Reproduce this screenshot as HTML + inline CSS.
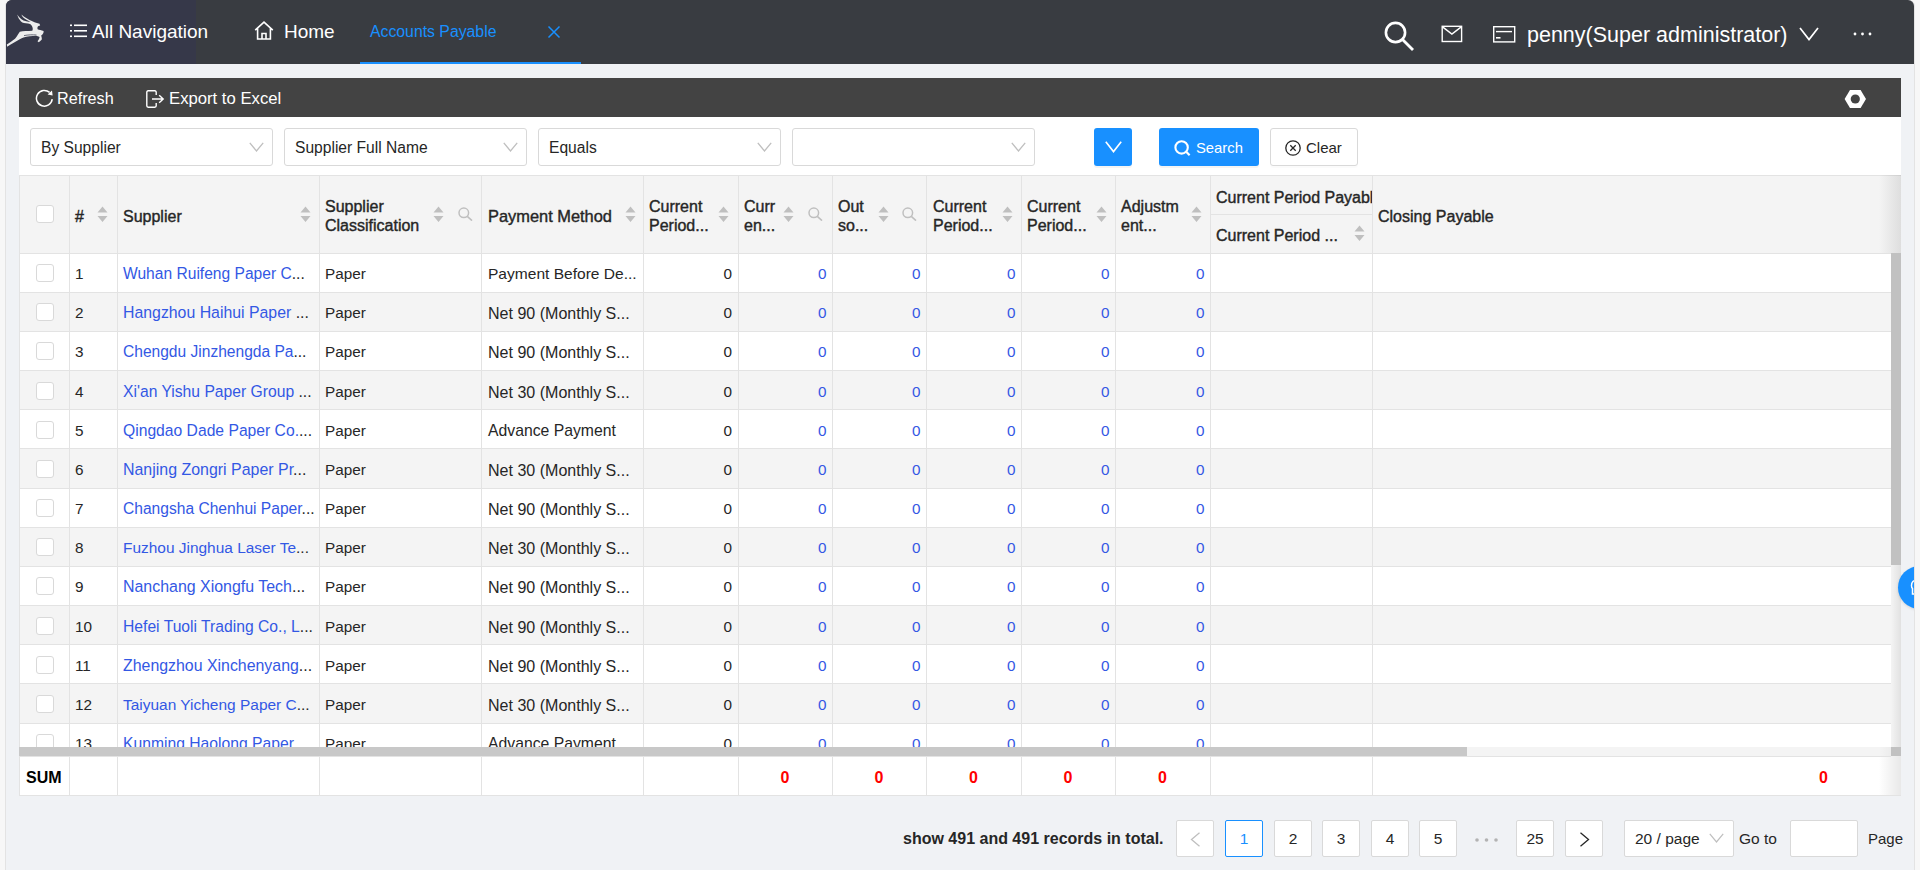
<!DOCTYPE html>
<html><head><meta charset="utf-8">
<style>
*{box-sizing:border-box;margin:0;padding:0}
html,body{width:1920px;height:870px;overflow:hidden;background:#f7f7f7;font-family:"Liberation Sans",sans-serif;color:#262626}
.abs{position:absolute}
#page{position:absolute;left:5px;top:0;width:1910px;height:870px;background:#f0f2f5;border-left:1px solid #e3e3e3;border-right:1px solid #e3e3e3;border-radius:6px 6px 0 0;overflow:hidden}
#hdr{position:absolute;left:6px;top:0;width:1908px;height:64px;background:#393c41;border-radius:6px 6px 0 0;overflow:hidden}
#logo{position:absolute;left:0;top:0;width:190px;height:64px;background:#363849}
.wt{color:#fff;white-space:nowrap}
#toolbar{position:absolute;left:19px;top:78px;width:1882px;height:39px;background:#434343}
#filter{position:absolute;left:19px;top:117px;width:1882px;height:58px;background:#fff}
.sel{position:absolute;top:11px;height:38px;width:243px;border:1px solid #d9d9d9;border-radius:3px;background:#fff;font-size:15.6px;color:#262626}
.sel span{position:absolute;left:10px;top:10px;white-space:nowrap}
.sel svg{position:absolute;right:8px;top:13px}
#tbl{position:absolute;left:19px;top:175px;width:1882px;height:621px}
.td{font-size:15.3px;color:#262626;white-space:nowrap;line-height:18px}
.lk{color:#3358e4}
.num{text-align:right}
.th{font-size:16px;font-weight:normal;-webkit-text-stroke:0.4px #262626;color:#262626;white-space:nowrap;line-height:19px;margin-top:1px}
.sum{font-size:16px;font-weight:bold;color:#000;line-height:18px}
.sumv{font-size:16px;font-weight:bold;color:#f00;line-height:18px}
.pbtn{position:absolute;top:820px;width:38px;height:37px;background:#fff;border:1px solid #d9d9d9;border-radius:2px;text-align:center;font-size:15.5px;line-height:35px;color:#262626}
</style></head>
<body>
<div id="page"></div>
<div id="hdr">
  <div id="logo">
    <svg class="abs" style="left:-6px;top:0" width="50" height="50" viewBox="0 0 50 50"><path d="M6.8 44.6 C10 42.5 13 40.5 15 38.8 C17 36.5 18.5 33.5 19.8 31.8 C23 31.2 28 31 32.3 30.8 C33 29.5 33 27.5 31.6 25.4 C30.5 24 29.5 23.5 28 23.4 C25 23.4 22.5 23 21 21.5 C19.2 19.6 17.8 17 17.2 14.6 C18.8 16.8 20.5 19.2 23.5 20.6 C26 21.5 28.5 21.8 30.5 22 C27.5 20.5 25 19 23.5 17.8 C22.5 17 21.8 15.8 21.5 14.6 C23.5 16.5 26 18.3 29.5 20 C32 21.2 34 22.2 36 22.8 L39.5 23.8 L40.2 25.4 L38.5 26 C37.5 26.5 37.2 27.5 37.6 29.2 C39 29.8 41.5 30.2 43.6 31 C43.8 32.5 43.2 34 41.2 35.6 C41.5 37 42 38.5 41.8 39.6 C40.8 40.8 39.8 41.8 38.8 42.3 L37.5 41.2 C38.5 40 39.5 38.5 39.6 37 C38.5 36.3 37.2 36 36 35.8 C32 36.2 27 36.5 23.5 37.4 C19 39.2 12 43.5 7.2 46.8 Z" fill="#ececec"/><path d="M24 35.6 C28 34.8 32.5 34.6 36.5 35" fill="none" stroke="#5a5c6c" stroke-width="0.9"/></svg>
  </div>
  <svg class="abs" style="left:64px;top:24px" width="17" height="14" viewBox="0 0 17 14"><g fill="#fff"><rect x="0" y="0.5" width="2" height="1.6"/><rect x="4" y="0.5" width="13" height="1.6"/><rect x="0" y="6" width="2" height="1.6"/><rect x="4" y="6" width="13" height="1.6"/><rect x="0" y="11.5" width="2" height="1.6"/><rect x="4" y="11.5" width="13" height="1.6"/></g></svg>
  <div class="abs wt" style="left:86px;top:21px;font-size:19px">All Navigation</div>
  <svg class="abs" style="left:248px;top:21px" width="20" height="19" viewBox="0 0 20 19"><path d="M1.2 9.2 L10 1.2 L18.8 9.2 M3.6 7.4 V18 H16.4 V7.4 M8 18 V12.5 H12 V18" fill="none" stroke="#fff" stroke-width="1.6" stroke-linejoin="miter"/></svg>
  <div class="abs wt" style="left:278px;top:21px;font-size:19px">Home</div>
  <div class="abs" style="left:364px;top:23px;font-size:15.8px;color:#1890ff;white-space:nowrap">Accounts Payable</div>
  <svg class="abs" style="left:541px;top:25px" width="14" height="14" viewBox="0 0 14 14"><path d="M1.5 1.5 L12.5 12.5 M12.5 1.5 L1.5 12.5" stroke="#1890ff" stroke-width="1.5"/></svg>
  <div class="abs" style="left:354px;top:62px;width:221px;height:2px;background:#1890ff"></div>
  <svg class="abs" style="left:1378px;top:21px" width="31" height="31" viewBox="0 0 31 31"><circle cx="11.5" cy="11.5" r="9.6" fill="none" stroke="#fff" stroke-width="2.6"/><path d="M18.5 18.5 L29 29" stroke="#fff" stroke-width="2.8"/></svg>
  <svg class="abs" style="left:1435px;top:25px" width="22" height="18" viewBox="0 0 22 18"><rect x="1.2" y="1.3" width="19.4" height="15.2" fill="none" stroke="#fff" stroke-width="1.4"/><path d="M1.2 1.6 L10.9 9 L20.6 1.6" fill="none" stroke="#fff" stroke-width="1.4"/></svg>
  <svg class="abs" style="left:1487px;top:26px" width="23" height="18" viewBox="0 0 23 18"><rect x="0.7" y="0.7" width="21" height="15.2" fill="none" stroke="#fff" stroke-width="1.4"/><path d="M3 5.6 H19" stroke="#fff" stroke-width="1.4"/><path d="M3 11.8 H7.5" stroke="#fff" stroke-width="1.6"/></svg>
  <div class="abs wt" style="left:1521px;top:23px;font-size:21.5px">penny(Super administrator)</div>
  <svg class="abs" style="left:1793px;top:27px" width="20" height="14" viewBox="0 0 20 14"><path d="M1 1 L10 12.5 L19 1" fill="none" stroke="#fff" stroke-width="1.7"/></svg>
  <svg class="abs" style="left:1847px;top:32px" width="20" height="4" viewBox="0 0 20 4"><circle cx="2" cy="2" r="1.4" fill="#fff"/><circle cx="9.5" cy="2" r="1.4" fill="#fff"/><circle cx="17" cy="2" r="1.4" fill="#fff"/></svg>
</div>
<div id="toolbar">
  <svg class="abs" style="left:16px;top:11px" width="19" height="19" viewBox="0 0 19 19"><path d="M17.2 10.2 A7.9 7.9 0 1 1 14.6 3.4" fill="none" stroke="#fff" stroke-width="1.5"/><path d="M12.6 5.6 L17.6 6.6 L17.0 1.4 Z" fill="#fff"/></svg>
  <div class="abs wt" style="left:38px;top:11px;font-size:16.2px">Refresh</div>
  <svg class="abs" style="left:127px;top:12px" width="19" height="18" viewBox="0 0 19 18"><path d="M10.2 5 V2.2 Q10.2 0.8 8.8 0.8 H2.2 Q0.8 0.8 0.8 2.2 V15.8 Q0.8 17.2 2.2 17.2 H8.8 Q10.2 17.2 10.2 15.8 V13" fill="none" stroke="#fff" stroke-width="1.4"/><path d="M6 9 H17 M13.2 5.2 L17.2 9 L13.2 12.8" fill="none" stroke="#fff" stroke-width="1.4"/></svg>
  <div class="abs wt" style="left:150px;top:11px;font-size:16.7px">Export to Excel</div>
  <svg class="abs" style="left:1825px;top:11px" width="23" height="20" viewBox="0 0 23 20"><path d="M6 1 H16.6 L22 10 L16.6 19 H6 L0.6 10 Z" fill="#fff"/><circle cx="11.3" cy="10" r="4.6" fill="#434343"/></svg>
</div>
<div id="filter">
  <div class="sel" style="left:11px"><span>By Supplier</span><svg width="15" height="10" viewBox="0 0 15 10"><path d="M0.8 0.8 L7.5 9 L14.2 0.8" fill="none" stroke="#bfbfbf" stroke-width="1.3"/></svg></div>
  <div class="sel" style="left:265px"><span>Supplier Full Name</span><svg width="15" height="10" viewBox="0 0 15 10"><path d="M0.8 0.8 L7.5 9 L14.2 0.8" fill="none" stroke="#bfbfbf" stroke-width="1.3"/></svg></div>
  <div class="sel" style="left:519px"><span>Equals</span><svg width="15" height="10" viewBox="0 0 15 10"><path d="M0.8 0.8 L7.5 9 L14.2 0.8" fill="none" stroke="#bfbfbf" stroke-width="1.3"/></svg></div>
  <div class="sel" style="left:773px"><svg width="15" height="10" viewBox="0 0 15 10"><path d="M0.8 0.8 L7.5 9 L14.2 0.8" fill="none" stroke="#bfbfbf" stroke-width="1.3"/></svg></div>
  <div class="abs" style="left:1075px;top:11px;width:38px;height:38px;background:#1890ff;border-radius:3px;box-shadow:0 2px 0 rgba(0,0,0,0.045)"><svg class="abs" style="left:11px;top:13px" width="17" height="12" viewBox="0 0 17 12"><path d="M0.8 0.8 L8.5 10.6 L16.2 0.8" fill="none" stroke="#fff" stroke-width="1.6"/></svg></div>
  <div class="abs" style="left:1140px;top:11px;width:100px;height:38px;background:#1890ff;border-radius:3px;box-shadow:0 2px 0 rgba(0,0,0,0.045)">
    <svg class="abs" style="left:15px;top:12px" width="18" height="17" viewBox="0 0 18 17"><circle cx="7.6" cy="7.4" r="6.2" fill="none" stroke="#fff" stroke-width="2.1"/><path d="M12.2 11.8 L15.6 15.2" stroke="#fff" stroke-width="2.2"/></svg>
    <div class="abs wt" style="left:37px;top:12px;font-size:14.8px">Search</div>
  </div>
  <div class="abs" style="left:1251px;top:11px;width:88px;height:38px;background:#fff;border:1px solid #d9d9d9;border-radius:3px;box-shadow:0 2px 0 rgba(0,0,0,0.015)">
    <svg class="abs" style="left:14px;top:11px" width="17" height="17" viewBox="0 0 17 17"><circle cx="8" cy="8" r="7.2" fill="none" stroke="#262626" stroke-width="1.3"/><path d="M5.3 5.3 L10.7 10.7 M10.7 5.3 L5.3 10.7" stroke="#262626" stroke-width="1.3"/></svg>
    <div class="abs" style="left:35px;top:10px;font-size:15px;color:#262626;white-space:nowrap">Clear</div>
  </div>
</div>
<div id="tbl">
<div class="abs" style="left:0px;top:0px;width:1882px;height:78px;background:#f4f4f4"></div>
<div class="abs" style="left:0;top:78px;width:1872px;height:494px;overflow:hidden">
<div class="abs" style="left:0px;top:0px;width:1872px;height:39.1667px;background:#fff"></div>
<div class="abs" style="left:0px;top:39.167px;width:1872px;height:39.1667px;background:#f4f4f4"></div>
<div class="abs" style="left:0px;top:78.333px;width:1872px;height:39.1667px;background:#fff"></div>
<div class="abs" style="left:0px;top:117.5px;width:1872px;height:39.1667px;background:#f4f4f4"></div>
<div class="abs" style="left:0px;top:156.667px;width:1872px;height:39.1667px;background:#fff"></div>
<div class="abs" style="left:0px;top:195.833px;width:1872px;height:39.1667px;background:#f4f4f4"></div>
<div class="abs" style="left:0px;top:235px;width:1872px;height:39.1667px;background:#fff"></div>
<div class="abs" style="left:0px;top:274.167px;width:1872px;height:39.1667px;background:#f4f4f4"></div>
<div class="abs" style="left:0px;top:313.334px;width:1872px;height:39.1667px;background:#fff"></div>
<div class="abs" style="left:0px;top:352.5px;width:1872px;height:39.1667px;background:#f4f4f4"></div>
<div class="abs" style="left:0px;top:391.667px;width:1872px;height:39.1667px;background:#fff"></div>
<div class="abs" style="left:0px;top:430.834px;width:1872px;height:39.1667px;background:#f4f4f4"></div>
<div class="abs" style="left:0px;top:470px;width:1872px;height:39.1667px;background:#fff"></div>
<div class="abs" style="left:0px;top:38.667px;width:1872px;height:1px;background:#e3e3e3"></div>
<div class="abs" style="left:0px;top:77.833px;width:1872px;height:1px;background:#e3e3e3"></div>
<div class="abs" style="left:0px;top:117px;width:1872px;height:1px;background:#e3e3e3"></div>
<div class="abs" style="left:0px;top:156.167px;width:1872px;height:1px;background:#e3e3e3"></div>
<div class="abs" style="left:0px;top:195.333px;width:1872px;height:1px;background:#e3e3e3"></div>
<div class="abs" style="left:0px;top:234.5px;width:1872px;height:1px;background:#e3e3e3"></div>
<div class="abs" style="left:0px;top:273.667px;width:1872px;height:1px;background:#e3e3e3"></div>
<div class="abs" style="left:0px;top:312.834px;width:1872px;height:1px;background:#e3e3e3"></div>
<div class="abs" style="left:0px;top:352px;width:1872px;height:1px;background:#e3e3e3"></div>
<div class="abs" style="left:0px;top:391.167px;width:1872px;height:1px;background:#e3e3e3"></div>
<div class="abs" style="left:0px;top:430.334px;width:1872px;height:1px;background:#e3e3e3"></div>
<div class="abs" style="left:0px;top:469.5px;width:1872px;height:1px;background:#e3e3e3"></div>
<div class="abs" style="left:0px;top:508.667px;width:1872px;height:1px;background:#e3e3e3"></div>
<div class="abs" style="left:0px;top:0px;width:1px;height:494px;background:#e3e3e3"></div>
<div class="abs" style="left:50px;top:0px;width:1px;height:494px;background:#e3e3e3"></div>
<div class="abs" style="left:98px;top:0px;width:1px;height:494px;background:#e3e3e3"></div>
<div class="abs" style="left:300px;top:0px;width:1px;height:494px;background:#e3e3e3"></div>
<div class="abs" style="left:462px;top:0px;width:1px;height:494px;background:#e3e3e3"></div>
<div class="abs" style="left:624px;top:0px;width:1px;height:494px;background:#e3e3e3"></div>
<div class="abs" style="left:719px;top:0px;width:1px;height:494px;background:#e3e3e3"></div>
<div class="abs" style="left:813px;top:0px;width:1px;height:494px;background:#e3e3e3"></div>
<div class="abs" style="left:907px;top:0px;width:1px;height:494px;background:#e3e3e3"></div>
<div class="abs" style="left:1002px;top:0px;width:1px;height:494px;background:#e3e3e3"></div>
<div class="abs" style="left:1096px;top:0px;width:1px;height:494px;background:#e3e3e3"></div>
<div class="abs" style="left:1191px;top:0px;width:1px;height:494px;background:#e3e3e3"></div>
<div class="abs" style="left:1353px;top:0px;width:1px;height:494px;background:#e3e3e3"></div>
<div class="abs" style="left:17px;top:11px;width:18px;height:18px;background:#fff;border:1px solid #d9d9d9;border-radius:3px"></div>
<div class="abs td" style="left:56px;top:12px;">1</div>
<div class="abs td lk" style="left:104px;top:12px;font-size:15.6px">Wuhan Ruifeng Paper C<span style="color:#262626">...</span></div>
<div class="abs td" style="left:306px;top:12px;">Paper</div>
<div class="abs td" style="left:469px;top:12px;font-size:15.55px">Payment Before De...</div>
<div class="abs td num" style="left:624px;top:12px;width:89px">0</div>
<div class="abs td num lk" style="left:719px;top:12px;width:88.5px">0</div>
<div class="abs td num lk" style="left:813px;top:12px;width:88.5px">0</div>
<div class="abs td num lk" style="left:907px;top:12px;width:89.5px">0</div>
<div class="abs td num lk" style="left:1002px;top:12px;width:88.5px">0</div>
<div class="abs td num lk" style="left:1096px;top:12px;width:89.5px">0</div>
<div class="abs" style="left:17px;top:50.167px;width:18px;height:18px;background:#fff;border:1px solid #d9d9d9;border-radius:3px"></div>
<div class="abs td" style="left:56px;top:51.167px;">2</div>
<div class="abs td lk" style="left:104px;top:51.167px;font-size:15.85px">Hangzhou Haihui Paper <span style="color:#262626">...</span></div>
<div class="abs td" style="left:306px;top:51.167px;">Paper</div>
<div class="abs td" style="left:469px;top:51.167px;font-size:16.05px">Net 90 (Monthly S...</div>
<div class="abs td num" style="left:624px;top:51.167px;width:89px">0</div>
<div class="abs td num lk" style="left:719px;top:51.167px;width:88.5px">0</div>
<div class="abs td num lk" style="left:813px;top:51.167px;width:88.5px">0</div>
<div class="abs td num lk" style="left:907px;top:51.167px;width:89.5px">0</div>
<div class="abs td num lk" style="left:1002px;top:51.167px;width:88.5px">0</div>
<div class="abs td num lk" style="left:1096px;top:51.167px;width:89.5px">0</div>
<div class="abs" style="left:17px;top:89.333px;width:18px;height:18px;background:#fff;border:1px solid #d9d9d9;border-radius:3px"></div>
<div class="abs td" style="left:56px;top:90.333px;">3</div>
<div class="abs td lk" style="left:104px;top:90.333px;font-size:15.57px">Chengdu Jinzhengda Pa<span style="color:#262626">...</span></div>
<div class="abs td" style="left:306px;top:90.333px;">Paper</div>
<div class="abs td" style="left:469px;top:90.333px;font-size:16.05px">Net 90 (Monthly S...</div>
<div class="abs td num" style="left:624px;top:90.333px;width:89px">0</div>
<div class="abs td num lk" style="left:719px;top:90.333px;width:88.5px">0</div>
<div class="abs td num lk" style="left:813px;top:90.333px;width:88.5px">0</div>
<div class="abs td num lk" style="left:907px;top:90.333px;width:89.5px">0</div>
<div class="abs td num lk" style="left:1002px;top:90.333px;width:88.5px">0</div>
<div class="abs td num lk" style="left:1096px;top:90.333px;width:89.5px">0</div>
<div class="abs" style="left:17px;top:128.5px;width:18px;height:18px;background:#fff;border:1px solid #d9d9d9;border-radius:3px"></div>
<div class="abs td" style="left:56px;top:129.5px;">4</div>
<div class="abs td lk" style="left:104px;top:129.5px;font-size:15.68px">Xi'an Yishu Paper Group <span style="color:#262626">...</span></div>
<div class="abs td" style="left:306px;top:129.5px;">Paper</div>
<div class="abs td" style="left:469px;top:129.5px;font-size:16.05px">Net 30 (Monthly S...</div>
<div class="abs td num" style="left:624px;top:129.5px;width:89px">0</div>
<div class="abs td num lk" style="left:719px;top:129.5px;width:88.5px">0</div>
<div class="abs td num lk" style="left:813px;top:129.5px;width:88.5px">0</div>
<div class="abs td num lk" style="left:907px;top:129.5px;width:89.5px">0</div>
<div class="abs td num lk" style="left:1002px;top:129.5px;width:88.5px">0</div>
<div class="abs td num lk" style="left:1096px;top:129.5px;width:89.5px">0</div>
<div class="abs" style="left:17px;top:167.667px;width:18px;height:18px;background:#fff;border:1px solid #d9d9d9;border-radius:3px"></div>
<div class="abs td" style="left:56px;top:168.667px;">5</div>
<div class="abs td lk" style="left:104px;top:168.667px;font-size:15.68px">Qingdao Dade Paper Co.<span style="color:#262626">...</span></div>
<div class="abs td" style="left:306px;top:168.667px;">Paper</div>
<div class="abs td" style="left:469px;top:168.667px;font-size:15.75px">Advance Payment</div>
<div class="abs td num" style="left:624px;top:168.667px;width:89px">0</div>
<div class="abs td num lk" style="left:719px;top:168.667px;width:88.5px">0</div>
<div class="abs td num lk" style="left:813px;top:168.667px;width:88.5px">0</div>
<div class="abs td num lk" style="left:907px;top:168.667px;width:89.5px">0</div>
<div class="abs td num lk" style="left:1002px;top:168.667px;width:88.5px">0</div>
<div class="abs td num lk" style="left:1096px;top:168.667px;width:89.5px">0</div>
<div class="abs" style="left:17px;top:206.833px;width:18px;height:18px;background:#fff;border:1px solid #d9d9d9;border-radius:3px"></div>
<div class="abs td" style="left:56px;top:207.833px;">6</div>
<div class="abs td lk" style="left:104px;top:207.833px;font-size:15.95px">Nanjing Zongri Paper Pr<span style="color:#262626">...</span></div>
<div class="abs td" style="left:306px;top:207.833px;">Paper</div>
<div class="abs td" style="left:469px;top:207.833px;font-size:16.05px">Net 30 (Monthly S...</div>
<div class="abs td num" style="left:624px;top:207.833px;width:89px">0</div>
<div class="abs td num lk" style="left:719px;top:207.833px;width:88.5px">0</div>
<div class="abs td num lk" style="left:813px;top:207.833px;width:88.5px">0</div>
<div class="abs td num lk" style="left:907px;top:207.833px;width:89.5px">0</div>
<div class="abs td num lk" style="left:1002px;top:207.833px;width:88.5px">0</div>
<div class="abs td num lk" style="left:1096px;top:207.833px;width:89.5px">0</div>
<div class="abs" style="left:17px;top:246px;width:18px;height:18px;background:#fff;border:1px solid #d9d9d9;border-radius:3px"></div>
<div class="abs td" style="left:56px;top:247px;">7</div>
<div class="abs td lk" style="left:104px;top:247px;font-size:15.6px">Changsha Chenhui Paper<span style="color:#262626">...</span></div>
<div class="abs td" style="left:306px;top:247px;">Paper</div>
<div class="abs td" style="left:469px;top:247px;font-size:16.05px">Net 90 (Monthly S...</div>
<div class="abs td num" style="left:624px;top:247px;width:89px">0</div>
<div class="abs td num lk" style="left:719px;top:247px;width:88.5px">0</div>
<div class="abs td num lk" style="left:813px;top:247px;width:88.5px">0</div>
<div class="abs td num lk" style="left:907px;top:247px;width:89.5px">0</div>
<div class="abs td num lk" style="left:1002px;top:247px;width:88.5px">0</div>
<div class="abs td num lk" style="left:1096px;top:247px;width:89.5px">0</div>
<div class="abs" style="left:17px;top:285.167px;width:18px;height:18px;background:#fff;border:1px solid #d9d9d9;border-radius:3px"></div>
<div class="abs td" style="left:56px;top:286.167px;">8</div>
<div class="abs td lk" style="left:104px;top:286.167px;font-size:15.45px">Fuzhou Jinghua Laser Te<span style="color:#262626">...</span></div>
<div class="abs td" style="left:306px;top:286.167px;">Paper</div>
<div class="abs td" style="left:469px;top:286.167px;font-size:16.05px">Net 30 (Monthly S...</div>
<div class="abs td num" style="left:624px;top:286.167px;width:89px">0</div>
<div class="abs td num lk" style="left:719px;top:286.167px;width:88.5px">0</div>
<div class="abs td num lk" style="left:813px;top:286.167px;width:88.5px">0</div>
<div class="abs td num lk" style="left:907px;top:286.167px;width:89.5px">0</div>
<div class="abs td num lk" style="left:1002px;top:286.167px;width:88.5px">0</div>
<div class="abs td num lk" style="left:1096px;top:286.167px;width:89.5px">0</div>
<div class="abs" style="left:17px;top:324.334px;width:18px;height:18px;background:#fff;border:1px solid #d9d9d9;border-radius:3px"></div>
<div class="abs td" style="left:56px;top:325.334px;">9</div>
<div class="abs td lk" style="left:104px;top:325.334px;font-size:15.95px">Nanchang Xiongfu Tech<span style="color:#262626">...</span></div>
<div class="abs td" style="left:306px;top:325.334px;">Paper</div>
<div class="abs td" style="left:469px;top:325.334px;font-size:16.05px">Net 90 (Monthly S...</div>
<div class="abs td num" style="left:624px;top:325.334px;width:89px">0</div>
<div class="abs td num lk" style="left:719px;top:325.334px;width:88.5px">0</div>
<div class="abs td num lk" style="left:813px;top:325.334px;width:88.5px">0</div>
<div class="abs td num lk" style="left:907px;top:325.334px;width:89.5px">0</div>
<div class="abs td num lk" style="left:1002px;top:325.334px;width:88.5px">0</div>
<div class="abs td num lk" style="left:1096px;top:325.334px;width:89.5px">0</div>
<div class="abs" style="left:17px;top:363.5px;width:18px;height:18px;background:#fff;border:1px solid #d9d9d9;border-radius:3px"></div>
<div class="abs td" style="left:56px;top:364.5px;">10</div>
<div class="abs td lk" style="left:104px;top:364.5px;font-size:15.68px">Hefei Tuoli Trading Co., L<span style="color:#262626">...</span></div>
<div class="abs td" style="left:306px;top:364.5px;">Paper</div>
<div class="abs td" style="left:469px;top:364.5px;font-size:16.05px">Net 90 (Monthly S...</div>
<div class="abs td num" style="left:624px;top:364.5px;width:89px">0</div>
<div class="abs td num lk" style="left:719px;top:364.5px;width:88.5px">0</div>
<div class="abs td num lk" style="left:813px;top:364.5px;width:88.5px">0</div>
<div class="abs td num lk" style="left:907px;top:364.5px;width:89.5px">0</div>
<div class="abs td num lk" style="left:1002px;top:364.5px;width:88.5px">0</div>
<div class="abs td num lk" style="left:1096px;top:364.5px;width:89.5px">0</div>
<div class="abs" style="left:17px;top:402.667px;width:18px;height:18px;background:#fff;border:1px solid #d9d9d9;border-radius:3px"></div>
<div class="abs td" style="left:56px;top:403.667px;">11</div>
<div class="abs td lk" style="left:104px;top:403.667px;font-size:15.9px">Zhengzhou Xinchenyang<span style="color:#262626">...</span></div>
<div class="abs td" style="left:306px;top:403.667px;">Paper</div>
<div class="abs td" style="left:469px;top:403.667px;font-size:16.05px">Net 90 (Monthly S...</div>
<div class="abs td num" style="left:624px;top:403.667px;width:89px">0</div>
<div class="abs td num lk" style="left:719px;top:403.667px;width:88.5px">0</div>
<div class="abs td num lk" style="left:813px;top:403.667px;width:88.5px">0</div>
<div class="abs td num lk" style="left:907px;top:403.667px;width:89.5px">0</div>
<div class="abs td num lk" style="left:1002px;top:403.667px;width:88.5px">0</div>
<div class="abs td num lk" style="left:1096px;top:403.667px;width:89.5px">0</div>
<div class="abs" style="left:17px;top:441.834px;width:18px;height:18px;background:#fff;border:1px solid #d9d9d9;border-radius:3px"></div>
<div class="abs td" style="left:56px;top:442.834px;">12</div>
<div class="abs td lk" style="left:104px;top:442.834px;font-size:15.47px">Taiyuan Yicheng Paper C<span style="color:#262626">...</span></div>
<div class="abs td" style="left:306px;top:442.834px;">Paper</div>
<div class="abs td" style="left:469px;top:442.834px;font-size:16.05px">Net 30 (Monthly S...</div>
<div class="abs td num" style="left:624px;top:442.834px;width:89px">0</div>
<div class="abs td num lk" style="left:719px;top:442.834px;width:88.5px">0</div>
<div class="abs td num lk" style="left:813px;top:442.834px;width:88.5px">0</div>
<div class="abs td num lk" style="left:907px;top:442.834px;width:89.5px">0</div>
<div class="abs td num lk" style="left:1002px;top:442.834px;width:88.5px">0</div>
<div class="abs td num lk" style="left:1096px;top:442.834px;width:89.5px">0</div>
<div class="abs" style="left:17px;top:481px;width:18px;height:18px;background:#fff;border:1px solid #d9d9d9;border-radius:3px"></div>
<div class="abs td" style="left:56px;top:482px;">13</div>
<div class="abs td lk" style="left:104px;top:482px;font-size:15.7px">Kunming Haolong Paper <span style="color:#262626">...</span></div>
<div class="abs td" style="left:306px;top:482px;">Paper</div>
<div class="abs td" style="left:469px;top:482px;font-size:15.75px">Advance Payment</div>
<div class="abs td num" style="left:624px;top:482px;width:89px">0</div>
<div class="abs td num lk" style="left:719px;top:482px;width:88.5px">0</div>
<div class="abs td num lk" style="left:813px;top:482px;width:88.5px">0</div>
<div class="abs td num lk" style="left:907px;top:482px;width:89.5px">0</div>
<div class="abs td num lk" style="left:1002px;top:482px;width:88.5px">0</div>
<div class="abs td num lk" style="left:1096px;top:482px;width:89.5px">0</div>
</div>
<div class="abs" style="left:0px;top:0px;width:1882px;height:1px;background:#e3e3e3"></div>
<div class="abs" style="left:0px;top:78px;width:1882px;height:1px;background:#e3e3e3"></div>
<div class="abs" style="left:1191px;top:39px;width:162px;height:1px;background:#e3e3e3"></div>
<div class="abs" style="left:0px;top:0px;width:1px;height:78px;background:#e3e3e3"></div>
<div class="abs" style="left:50px;top:0px;width:1px;height:78px;background:#e3e3e3"></div>
<div class="abs" style="left:98px;top:0px;width:1px;height:78px;background:#e3e3e3"></div>
<div class="abs" style="left:300px;top:0px;width:1px;height:78px;background:#e3e3e3"></div>
<div class="abs" style="left:462px;top:0px;width:1px;height:78px;background:#e3e3e3"></div>
<div class="abs" style="left:624px;top:0px;width:1px;height:78px;background:#e3e3e3"></div>
<div class="abs" style="left:719px;top:0px;width:1px;height:78px;background:#e3e3e3"></div>
<div class="abs" style="left:813px;top:0px;width:1px;height:78px;background:#e3e3e3"></div>
<div class="abs" style="left:907px;top:0px;width:1px;height:78px;background:#e3e3e3"></div>
<div class="abs" style="left:1002px;top:0px;width:1px;height:78px;background:#e3e3e3"></div>
<div class="abs" style="left:1096px;top:0px;width:1px;height:78px;background:#e3e3e3"></div>
<div class="abs" style="left:1191px;top:0px;width:1px;height:78px;background:#e3e3e3"></div>
<div class="abs" style="left:1353px;top:0px;width:1px;height:78px;background:#e3e3e3"></div>
<div class="abs" style="left:17px;top:30px;width:18px;height:18px;background:#fff;border:1px solid #d9d9d9;border-radius:3px"></div>
<div class="abs th" style="left:56px;top:31px;">#</div>
<svg class="abs" style="left:78px;top:31px" width="11" height="17" viewBox="0 0 11 17"><path d="M5.5 0.5 L10.5 6.5 H0.5 Z M0.5 10 H10.5 L5.5 16 Z" fill="#bfbfbf"/></svg>
<div class="abs th" style="left:104px;top:31px;">Supplier</div>
<svg class="abs" style="left:281px;top:31px" width="11" height="17" viewBox="0 0 11 17"><path d="M5.5 0.5 L10.5 6.5 H0.5 Z M0.5 10 H10.5 L5.5 16 Z" fill="#bfbfbf"/></svg>
<div class="abs th th2" style="left:306px;top:21px;">Supplier<br>Classification</div>
<svg class="abs" style="left:414px;top:31px" width="11" height="17" viewBox="0 0 11 17"><path d="M5.5 0.5 L10.5 6.5 H0.5 Z M0.5 10 H10.5 L5.5 16 Z" fill="#bfbfbf"/></svg>
<svg class="abs" style="left:439px;top:32px" width="15" height="14" viewBox="0 0 15 14"><circle cx="5.8" cy="5.8" r="4.8" fill="none" stroke="#bfbfbf" stroke-width="1.5"/><path d="M9.3 9.3 L14 13.6" stroke="#bfbfbf" stroke-width="1.6"/></svg>
<div class="abs th" style="left:469px;top:31px;font-size:16.4px">Payment Method</div>
<svg class="abs" style="left:606px;top:31px" width="11" height="17" viewBox="0 0 11 17"><path d="M5.5 0.5 L10.5 6.5 H0.5 Z M0.5 10 H10.5 L5.5 16 Z" fill="#bfbfbf"/></svg>
<div class="abs th th2" style="left:630px;top:21px;">Current<br>Period...</div>
<svg class="abs" style="left:699px;top:31px" width="11" height="17" viewBox="0 0 11 17"><path d="M5.5 0.5 L10.5 6.5 H0.5 Z M0.5 10 H10.5 L5.5 16 Z" fill="#bfbfbf"/></svg>
<div class="abs th th2" style="left:725px;top:21px;">Curr<br>en...</div>
<svg class="abs" style="left:764px;top:31px" width="11" height="17" viewBox="0 0 11 17"><path d="M5.5 0.5 L10.5 6.5 H0.5 Z M0.5 10 H10.5 L5.5 16 Z" fill="#bfbfbf"/></svg>
<svg class="abs" style="left:789px;top:32px" width="15" height="14" viewBox="0 0 15 14"><circle cx="5.8" cy="5.8" r="4.8" fill="none" stroke="#bfbfbf" stroke-width="1.5"/><path d="M9.3 9.3 L14 13.6" stroke="#bfbfbf" stroke-width="1.6"/></svg>
<div class="abs th th2" style="left:819px;top:21px;">Out<br>so...</div>
<svg class="abs" style="left:859px;top:31px" width="11" height="17" viewBox="0 0 11 17"><path d="M5.5 0.5 L10.5 6.5 H0.5 Z M0.5 10 H10.5 L5.5 16 Z" fill="#bfbfbf"/></svg>
<svg class="abs" style="left:883px;top:32px" width="15" height="14" viewBox="0 0 15 14"><circle cx="5.8" cy="5.8" r="4.8" fill="none" stroke="#bfbfbf" stroke-width="1.5"/><path d="M9.3 9.3 L14 13.6" stroke="#bfbfbf" stroke-width="1.6"/></svg>
<div class="abs th th2" style="left:914px;top:21px;">Current<br>Period...</div>
<svg class="abs" style="left:983px;top:31px" width="11" height="17" viewBox="0 0 11 17"><path d="M5.5 0.5 L10.5 6.5 H0.5 Z M0.5 10 H10.5 L5.5 16 Z" fill="#bfbfbf"/></svg>
<div class="abs th th2" style="left:1008px;top:21px;">Current<br>Period...</div>
<svg class="abs" style="left:1077px;top:31px" width="11" height="17" viewBox="0 0 11 17"><path d="M5.5 0.5 L10.5 6.5 H0.5 Z M0.5 10 H10.5 L5.5 16 Z" fill="#bfbfbf"/></svg>
<div class="abs th th2" style="left:1102px;top:21px;">Adjustm<br>ent...</div>
<svg class="abs" style="left:1172px;top:31px" width="11" height="17" viewBox="0 0 11 17"><path d="M5.5 0.5 L10.5 6.5 H0.5 Z M0.5 10 H10.5 L5.5 16 Z" fill="#bfbfbf"/></svg>
<div class="abs" style="left:1192px;top:1px;width:161px;height:38px;overflow:hidden"><div class="abs th" style="left:5px;top:11px">Current Period Payable</div></div>
<div class="abs th" style="left:1197px;top:50px;">Current Period ...</div>
<svg class="abs" style="left:1335px;top:50px" width="11" height="17" viewBox="0 0 11 17"><path d="M5.5 0.5 L10.5 6.5 H0.5 Z M0.5 10 H10.5 L5.5 16 Z" fill="#bfbfbf"/></svg>
<div class="abs th" style="left:1359px;top:31px;">Closing Payable</div>
<div class="abs" style="left:1872px;top:78px;width:10px;height:312px;background:#c1c1c1"></div>
<div class="abs" style="left:1872px;top:390px;width:10px;height:182px;background:#f4f4f4"></div>
<div class="abs" style="left:0px;top:572px;width:1872px;height:9px;background:#f4f4f4"></div>
<div class="abs" style="left:0px;top:572px;width:1448px;height:9px;background:#c8c8c8"></div>
<div class="abs" style="left:1872px;top:572px;width:10px;height:9px;background:#c1c1c1"></div>
<div class="abs" style="left:0px;top:581px;width:1882px;height:39px;background:#fff"></div>
<div class="abs" style="left:0px;top:620px;width:1882px;height:1px;background:#e3e3e3"></div>
<div class="abs" style="left:0px;top:581px;width:1px;height:39px;background:#e3e3e3"></div>
<div class="abs" style="left:50px;top:581px;width:1px;height:39px;background:#e3e3e3"></div>
<div class="abs" style="left:98px;top:581px;width:1px;height:39px;background:#e3e3e3"></div>
<div class="abs" style="left:300px;top:581px;width:1px;height:39px;background:#e3e3e3"></div>
<div class="abs" style="left:462px;top:581px;width:1px;height:39px;background:#e3e3e3"></div>
<div class="abs" style="left:624px;top:581px;width:1px;height:39px;background:#e3e3e3"></div>
<div class="abs" style="left:719px;top:581px;width:1px;height:39px;background:#e3e3e3"></div>
<div class="abs" style="left:813px;top:581px;width:1px;height:39px;background:#e3e3e3"></div>
<div class="abs" style="left:907px;top:581px;width:1px;height:39px;background:#e3e3e3"></div>
<div class="abs" style="left:1002px;top:581px;width:1px;height:39px;background:#e3e3e3"></div>
<div class="abs" style="left:1096px;top:581px;width:1px;height:39px;background:#e3e3e3"></div>
<div class="abs" style="left:1191px;top:581px;width:1px;height:39px;background:#e3e3e3"></div>
<div class="abs" style="left:1353px;top:581px;width:1px;height:39px;background:#e3e3e3"></div>
<div class="abs sum" style="left:7px;top:594px;">SUM</div>
<div class="abs sumv" style="left:719px;top:594px;width:94px;text-align:center">0</div>
<div class="abs sumv" style="left:813px;top:594px;width:94px;text-align:center">0</div>
<div class="abs sumv" style="left:907px;top:594px;width:95px;text-align:center">0</div>
<div class="abs sumv" style="left:1002px;top:594px;width:94px;text-align:center">0</div>
<div class="abs sumv" style="left:1096px;top:594px;width:95px;text-align:center">0</div>
<div class="abs sumv" style="left:1800px;top:594px;">0</div>
<div class="abs" style="left:1860px;top:0px;width:22px;height:78px;background:linear-gradient(to right,rgba(0,0,0,0),rgba(0,0,0,0.09))"></div>
<div class="abs" style="left:1872px;top:390px;width:10px;height:182px;background:linear-gradient(to right,rgba(0,0,0,0.0),rgba(0,0,0,0.08))"></div>
<div class="abs" style="left:1860px;top:572px;width:12px;height:9px;background:linear-gradient(to right,rgba(0,0,0,0),rgba(0,0,0,0.03))"></div>
<div class="abs" style="left:1860px;top:581px;width:22px;height:39px;background:linear-gradient(to right,rgba(0,0,0,0),rgba(0,0,0,0.09))"></div>
<div class="abs" style="left:0px;top:581px;width:1872px;height:1px;background:#e3e3e3"></div>
</div><!--/tbl-->
<div id="pager">
  <div class="abs" style="left:903px;top:829px;font-size:16px;font-weight:bold;color:#262626;white-space:nowrap;line-height:19px">show 491 and 491 records in total.</div>
  <div class="pbtn" style="left:1176px"><svg class="abs" style="left:13px;top:11px" width="11" height="15" viewBox="0 0 11 15"><path d="M9.5 0.8 L1.5 7.5 L9.5 14.2" fill="none" stroke="#bfbfbf" stroke-width="1.3"/></svg></div>
  <div class="pbtn" style="left:1225px;border-color:#1890ff;color:#1890ff">1</div>
  <div class="pbtn" style="left:1274px">2</div>
  <div class="pbtn" style="left:1322px">3</div>
  <div class="pbtn" style="left:1371px">4</div>
  <div class="pbtn" style="left:1419px">5</div>
  <svg class="abs" style="left:1475px;top:838px" width="24" height="4" viewBox="0 0 24 4"><circle cx="2" cy="2" r="1.8" fill="#b3b3b3"/><circle cx="11.5" cy="2" r="1.8" fill="#b3b3b3"/><circle cx="21" cy="2" r="1.8" fill="#b3b3b3"/></svg>
  <div class="pbtn" style="left:1516px">25</div>
  <div class="pbtn" style="left:1565px"><svg class="abs" style="left:13px;top:11px" width="11" height="15" viewBox="0 0 11 15"><path d="M1.5 0.8 L9.5 7.5 L1.5 14.2" fill="none" stroke="#262626" stroke-width="1.3"/></svg></div>
  <div class="abs" style="left:1624px;top:820px;width:110px;height:37px;background:#fff;border:1px solid #d9d9d9;border-radius:2px">
    <div class="abs" style="left:10px;top:9px;font-size:15.5px;color:#262626;white-space:nowrap;line-height:18px">20 / page</div>
    <svg class="abs" style="left:84px;top:12px" width="15" height="10" viewBox="0 0 15 10"><path d="M0.8 0.8 L7.5 9 L14.2 0.8" fill="none" stroke="#bfbfbf" stroke-width="1.2"/></svg>
  </div>
  <div class="abs" style="left:1739px;top:830px;font-size:15.5px;color:#262626;white-space:nowrap;line-height:18px">Go to</div>
  <div class="abs" style="left:1790px;top:820px;width:68px;height:37px;background:#fff;border:1px solid #d9d9d9;border-radius:2px"></div>
  <div class="abs" style="left:1868px;top:830px;font-size:15px;color:#262626;white-space:nowrap;line-height:18px">Page</div>
</div>

<div class="abs" style="left:1880px;top:540px;width:34px;height:100px;overflow:hidden"><div class="abs" style="left:18px;top:26px;width:43px;height:43px;border-radius:50%;background:#1890ff;box-shadow:0 1px 3px rgba(0,0,0,0.12)"><svg class="abs" style="left:12px;top:13px" width="14" height="16" viewBox="0 0 14 16"><path d="M7 1 C3.5 1 1.5 3.5 1.5 6.5 C1.5 8 2 9 2.5 9.5 V15 H11.5 V9.5 C12 9 12.5 8 12.5 6.5 C12.5 3.5 10.5 1 7 1 Z" fill="none" stroke="#fff" stroke-width="1.5"/></svg></div></div>
</body></html>
